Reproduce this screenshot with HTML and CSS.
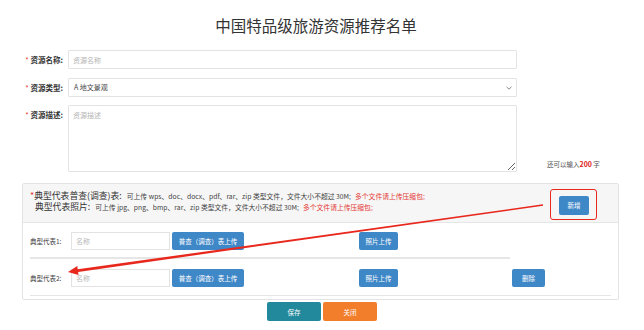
FILE: index.html
```html
<!DOCTYPE html>
<html lang="zh-CN">
<head>
  <meta charset="UTF-8">
  <title>中国特品级旅游资源推荐名单</title>
  <link rel="stylesheet" href="styles.css">
</head>
<body>
  <h1 class="page-title">中国特品级旅游资源推荐名单</h1>

  <div class="form-row">
    <label class="form-label"><span class="req">*</span> 资源名称:</label>
    <input class="form-input" type="text" placeholder="资源名称">
  </div>
  <div class="form-row">
    <label class="form-label"><span class="req">*</span> 资源类型:</label>
    <div class="select-wrap">
      <select class="form-input form-select">
        <option>A 地文景观</option>
      </select>
      <svg class="chevron" width="6" height="4" viewBox="0 0 6 4"><path d="M0.5 0.8 L3 3.2 L5.5 0.8" fill="none" stroke="#888" stroke-width="1"/></svg>
    </div>
  </div>
  <div class="form-row form-row-top">
    <label class="form-label"><span class="req">*</span> 资源描述:</label>
    <textarea class="form-input form-textarea" placeholder="资源描述"></textarea>
    <div class="counter">还可以输入<b>200</b> 字</div>
  </div>

  <div class="panel">
    <div class="panel-head">
      <div class="head-text">
        <div class="head-line"><span class="req">*</span><span class="head-title">典型代表普查(调查)表:</span><span class="hint">可上传 wps、doc、docx、pdf、rar、zip 类型文件，文件大小不超过 30M;</span><span class="hint hint-red">多个文件请上传压缩包;</span></div>
        <div class="head-line head-line-2"><span class="head-title">典型代表照片:</span><span class="hint">可上传 jpg、png、bmp、rar、zip 类型文件，文件大小不超过 30M;</span><span class="hint hint-red">多个文件请上传压缩包;</span></div>
      </div>
      <div class="mark-box">
        <button class="btn btn-blue btn-add">新增</button>
      </div>
    </div>
    <div class="panel-body">
      <div class="rep-row">
        <span class="rep-label">典型代表1:</span>
        <input class="rep-input" type="text" placeholder="名称">
        <button class="btn btn-blue btn-survey">普查（调查）表上传</button>
        <button class="btn btn-blue btn-photo">照片上传</button>
      </div>
      <div class="rep-sep rep-sep-short"></div>
      <div class="rep-row">
        <span class="rep-label">典型代表2:</span>
        <input class="rep-input" type="text" placeholder="名称">
        <button class="btn btn-blue btn-survey">普查（调查）表上传</button>
        <button class="btn btn-blue btn-photo">照片上传</button>
        <button class="btn btn-blue btn-del">删除</button>
      </div>
      <div class="rep-sep"></div>
    </div>
  </div>

  <div class="actions">
    <button class="btn btn-save">保存</button>
    <button class="btn btn-close">关闭</button>
  </div>

  <!-- annotation arrow -->
  <svg class="annot" width="644" height="330" viewBox="0 0 644 330">
    <polygon points="542.9,204.3 77.7,269.3 77.3,266.1 68,272 78.5,275.1 78.1,271.9 543.1,205.7" fill="#e8271d"/>
  </svg>
</body>
</html>
```

FILE: styles.css
```css
body {
  margin: 0;
  padding: 0;
  font-family: "Noto Sans CJK SC", "Noto Sans", sans-serif;
  color: #333;
  background: #ffffff;
  position: relative;
  width: 644px;
  height: 330px;
  overflow: hidden;
}
.page-title {
  margin: 14px 0 0 0;
  height: 22px;
  line-height: 22px;
  font-size: 15.5px;
  font-weight: normal;
  text-align: center;
  color: #333;
  padding-right: 12px;
}
.form-row {
  display: flex;
  align-items: center;
  margin-top: 9px;
}
.form-row:first-of-type {
  margin-top: 14px;
}
.form-row-top {
  align-items: flex-start;
  margin-top: 8px;
}
.form-label {
  box-sizing: border-box;
  width: 68px;
  padding-right: 5px;
  text-align: right;
  font-size: 7.5px;
  font-weight: bold;
  color: #333;
  white-space: nowrap;
}
.form-row-top .form-label {
  padding-top: 4px;
}
.req {
  color: #e53935;
  font-weight: normal;
}
.form-input {
  box-sizing: border-box;
  display: block;
  width: 449px;
  height: 19px;
  border: 1px solid #e3e3e3;
  border-radius: 1px;
  padding: 0 4px;
  font-family: inherit;
  font-size: 7px;
  color: #444;
  outline: none;
  background: #fff;
}
.form-input::placeholder {
  color: #b5b5b5;
}
.select-wrap {
  position: relative;
  width: 449px;
  height: 19px;
}
.form-select {
  appearance: none;
  -webkit-appearance: none;
  padding-left: 5px;
  line-height: 17px;
}
.chevron {
  position: absolute;
  right: 5px;
  top: 8px;
}
.form-textarea {
  height: 67px;
  padding: 4px;
  resize: vertical;
}
.counter {
  align-self: flex-end;
  margin-left: 30px;
  margin-bottom: 3px;
  font-size: 6.5px;
  color: #555;
  white-space: nowrap;
}
.counter b {
  color: #e02020;
  font-size: 7px;
}

.panel {
  margin: 11px 25px 0 22px;
  border: 1px solid #e3e3e3;
  border-radius: 2px;
  height: 117px;
  box-sizing: border-box;
}
.panel-head {
  display: flex;
  align-items: center;
  justify-content: space-between;
  height: 38px;
  background: #f6f6f6;
  border-bottom: 1px solid #e6e6e6;
  padding: 0 21px 0 7px;
}
.head-text {
  margin-top: -5px;
}
.head-line {
  display: flex;
  align-items: baseline;
  height: 11px;
  line-height: 11px;
  white-space: nowrap;
}
.head-line span {
  line-height: 11px;
}
.head-line-2 {
  padding-left: 5px;
}
.head-line .req {
  font-size: 9px;
}
.head-title {
  font-size: 8.8px;
  color: #333;
  margin-right: 5px;
}
.hint {
  font-size: 6.8px;
  color: #444;
}
.hint-red {
  color: #e53935;
  margin-left: 4px;
}
.mark-box {
  display: flex;
  padding: 6px 7px 4px 8px;
  border: 1.5px solid #e8271d;
  border-radius: 3px;
  margin-top: 2px;
}
.btn {
  border: none;
  border-radius: 2px;
  color: #fff;
  font-family: inherit;
  font-size: 6.5px;
  height: 18px;
  padding: 0;
  cursor: pointer;
}
.btn-blue {
  background: #3f88c8;
}
.btn-add {
  width: 30px;
  height: 19px;
}
.panel-body {
  padding: 9px 7px 0 7px;
}
.rep-row {
  display: flex;
  align-items: center;
  height: 18px;
}
.rep-label {
  width: 41px;
  font-size: 6.5px;
  color: #444;
  white-space: nowrap;
}
.rep-input {
  box-sizing: border-box;
  width: 99px;
  height: 18px;
  border: 1px solid #e3e3e3;
  padding: 0 4px;
  font-family: inherit;
  font-size: 7px;
  outline: none;
}
.rep-input::placeholder {
  color: #b8b8b8;
}
.btn-survey {
  width: 72px;
  margin-left: 2px;
}
.btn-photo {
  width: 39px;
  margin-left: 115px;
}
.btn-del {
  width: 33px;
  margin-left: 114px;
}
.rep-sep {
  height: 1px;
  background: #e6e6e6;
  margin: 8px 0 0 0;
  width: 581px;
}
.rep-sep-short {
  height: 2px;
  width: 480px;
  margin: 7px 0 10px 0;
}
.actions {
  display: flex;
  justify-content: center;
  gap: 2px;
  margin-top: 2px;
}
.btn-save {
  width: 54px;
  height: 19px;
  background: #21899b;
}
.btn-close {
  width: 54px;
  height: 19px;
  background: #f27e2c;
}
.annot {
  position: absolute;
  left: 0;
  top: 0;
  pointer-events: none;
}
```
